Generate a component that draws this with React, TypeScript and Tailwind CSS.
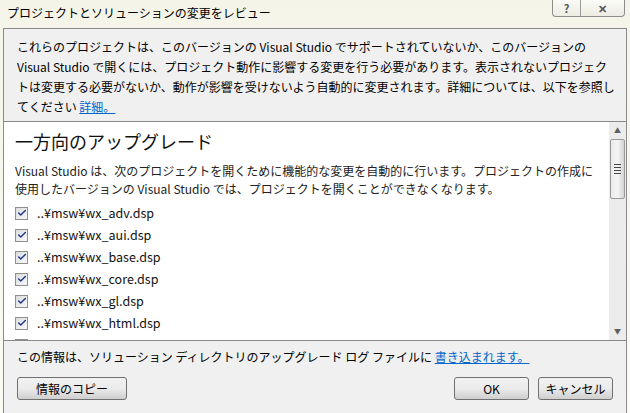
import { Check } from "lucide-react";

const files = [
  "..¥msw¥wx_adv.dsp",
  "..¥msw¥wx_aui.dsp",
  "..¥msw¥wx_base.dsp",
  "..¥msw¥wx_core.dsp",
  "..¥msw¥wx_gl.dsp",
  "..¥msw¥wx_html.dsp",
  "..¥msw¥wx_media.dsp",
];

const font = { fontFamily: '"Noto Sans CJK JP", "Noto Sans", sans-serif' };

function WinButton({ label, className }: { label: string; className: string }) {
  return (
    <button
      className={
        "h-[23px] rounded-[3px] border border-[#707070] bg-gradient-to-b from-[#f2f2f2] via-[#ebebeb] to-[#cfcfcf] text-[12px] text-black " +
        className
      }
    >
      {label}
    </button>
  );
}

export default function App() {
  return (
    <div
      className="w-[630px] h-[413px] overflow-hidden bg-gradient-to-b from-[#f4f4e8] to-[#fbfbf3] flex flex-col text-black"
      style={font}
    >
      {/* Title bar */}
      <div className="h-[28px] flex items-start relative shrink-0">
        <span className="pl-[7px] pt-[3px] text-[12px] leading-[20px]">
          プロジェクトとソリューションの変更をレビュー
        </span>
        <div className="absolute right-[5px] top-0 flex h-[17px] border border-t-0 border-[#8d8d8d] rounded-b-[4px] bg-gradient-to-b from-[#fbfbf7] to-[#ecece2]">
          <div className="w-[28px] flex items-center justify-center border-r border-[#9a9a9a] text-[11px] font-bold text-[#555]">?</div>
          <div className="w-[43px] flex items-center justify-center text-[11px] font-bold text-[#555]">✕</div>
        </div>
      </div>

      {/* Body */}
      <div className="flex-1 mx-[3px] border border-b-0 border-[#8a8a8a] bg-[#f0f0f0] flex flex-col min-h-0">
        <div className="h-[93px] shrink-0 border-b border-[#8a8a8a] px-[13px] pt-[8px] text-[12px] leading-[20px] whitespace-nowrap overflow-hidden">
          <div>これらのプロジェクトは、このバージョンの Visual Studio でサポートされていないか、このバージョンの</div>
          <div>Visual Studio で開くには、プロジェクト動作に影響する変更を行う必要があります。表示されないプロジェク</div>
          <div>トは変更する必要がないか、動作が影響を受けないよう自動的に変更されます。詳細については、以下を参照し</div>
          <div>
            てください <span className="text-[#0066cc] underline">詳細。</span>
          </div>
        </div>

        <div className="h-[219px] shrink-0 bg-white border-b border-[#8a8a8a] flex min-h-0">
          <div className="flex-1 overflow-hidden pl-[11px] pt-[7px]">
            <div className="text-[18px] leading-[24px] text-[#111]">一方向のアップグレード</div>
            <div className="mt-[9px] text-[12px] leading-[18px] text-[#222] whitespace-nowrap">
              <div>Visual Studio は、次のプロジェクトを開くために機能的な変更を自動的に行います。プロジェクトの作成に</div>
              <div>使用したバージョンの Visual Studio では、プロジェクトを開くことができなくなります。</div>
            </div>
            <div className="mt-[4px] flex flex-col">
              {files.map((f) => (
                <div key={f} className="h-[22px] flex items-center gap-[9px]">
                  <div className="w-[13px] h-[13px] border border-[#8f8f8f] bg-gradient-to-br from-[#dcdcdc] to-[#f8f8f8] flex items-center justify-center">
                    <Check className="w-[10px] h-[10px] text-[#21398c]" strokeWidth={3.5} />
                  </div>
                  <span className="text-[12.5px] text-[#111]">{f}</span>
                </div>
              ))}
            </div>
          </div>
          {/* Scrollbar */}
          <div className="w-[17px] bg-[#ececec] flex flex-col items-center">
            <div className="h-[17px] flex items-center justify-center text-[7px] text-[#606060]">▲</div>
            <div className="w-[15px] h-[60px] rounded-[2px] border border-[#9a9a9a] bg-gradient-to-r from-[#e9e9e9] via-[#f5f5f5] to-[#d5d5d5] flex flex-col items-center justify-center gap-[2px]">
              <div className="w-[7px] h-px bg-[#444]" />
              <div className="w-[7px] h-px bg-[#444]" />
              <div className="w-[7px] h-px bg-[#444]" />
              <div className="w-[7px] h-px bg-[#444]" />
            </div>
            <div className="flex-1" />
            <div className="h-[17px] flex items-center justify-center text-[7px] text-[#606060]">▼</div>
          </div>
        </div>

        <div className="flex-1 flex flex-col px-[13px]">
          <div className="pt-[6px] text-[12px] leading-[20px] whitespace-nowrap">
            この情報は、ソリューション ディレクトリのアップグレード ログ ファイルに{" "}
            <span className="text-[#0066cc] underline">書き込まれます。</span>
          </div>
          <div className="mt-[10px] flex items-center">
            <WinButton label="情報のコピー" className="w-[110px]" />
            <div className="flex-1" />
            <WinButton label="OK" className="w-[75px]" />
            <WinButton label="キャンセル" className="w-[75px] ml-[9px]" />
          </div>
        </div>
      </div>
    </div>
  );
}
